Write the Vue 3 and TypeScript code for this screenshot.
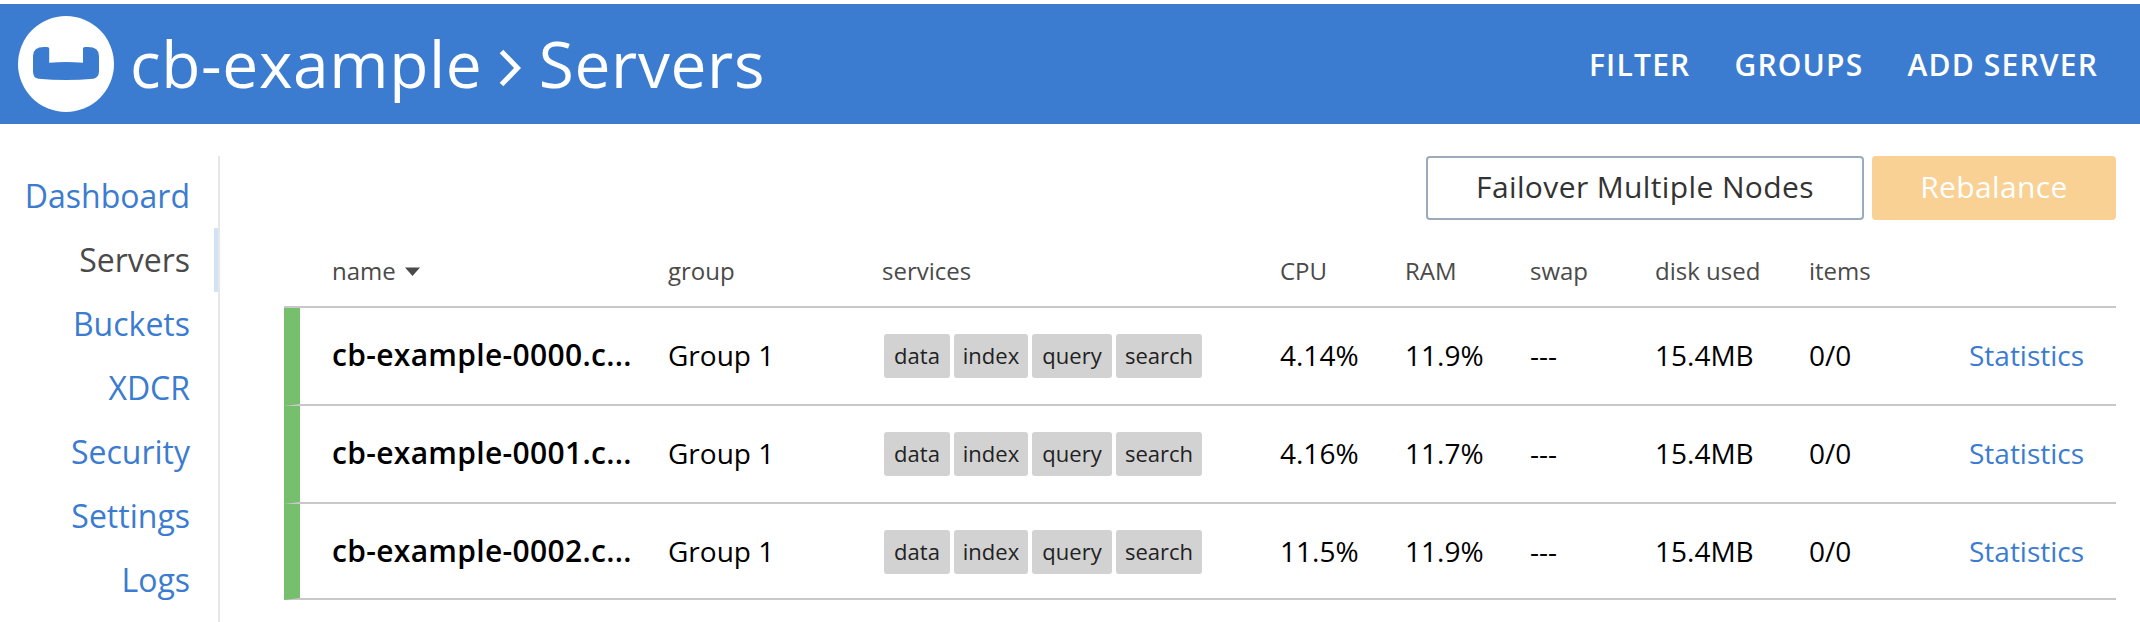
<script setup lang="ts">
interface ServerNode {
  name: string
  cpu: string
  ram: string
}

const actions: string[] = ['FILTER', 'GROUPS', 'ADD SERVER']
const menu: string[] = ['Dashboard', 'Servers', 'Buckets', 'XDCR', 'Security', 'Settings', 'Logs']
const active = 'Servers'
const services: string[] = ['data', 'index', 'query', 'search']
const nodes: ServerNode[] = [
  { name: 'cb-example-0000.c...', cpu: '4.14%', ram: '11.9%' },
  { name: 'cb-example-0001.c...', cpu: '4.16%', ram: '11.7%' },
  { name: 'cb-example-0002.c...', cpu: '11.5%', ram: '11.9%' },
]
</script>

<template>
  <div class="page">
    <header class="topbar">
      <svg class="logo" viewBox="0 0 96 96" width="96" height="96" aria-hidden="true">
        <circle cx="48" cy="48" r="48" fill="#fff" />
        <path
          fill="#3b7cd0"
          d="M31.200 32.500Q31.200 31 29 31H26Q15 31 15 40V55.500Q15 62 20.500 62.800Q48 65.300 75.500 62.800Q81 61.500 81 55.500V40Q81 31 70 31H67Q65 31 65 32.500V46.700Q48 45.300 31.200 46.700Z"
        />
      </svg>
      <h1 class="title">
        <span>cb-example</span>
        <svg class="chevron" viewBox="0 0 22 38" width="22" height="38" aria-hidden="true">
          <path d="M2.500 2.500L18.500 19L2.500 35.500" fill="none" stroke="#fff" stroke-width="5" />
        </svg>
        <span>Servers</span>
      </h1>
      <nav class="actions">
        <a v-for="a in actions" :key="a">{{ a }}</a>
      </nav>
    </header>
    <div class="body">
      <nav class="side">
        <a v-for="m in menu" :key="m" :class="{ on: m === active }">{{ m }}</a>
      </nav>
      <main class="main">
        <div class="buttons">
          <button class="btn outline">Failover Multiple Nodes</button>
          <button class="btn primary">Rebalance</button>
        </div>
        <div class="row head">
          <span class="sort">
            name
            <svg viewBox="0 0 15 9" width="15" height="9" aria-hidden="true">
              <path d="M0 0.500H15L7.500 9Z" fill="#4a4a4a" />
            </svg>
          </span>
          <span>group</span>
          <span>services</span>
          <span>CPU</span>
          <span>RAM</span>
          <span>swap</span>
          <span>disk used</span>
          <span>items</span>
        </div>
        <div v-for="n in nodes" :key="n.name" class="row node">
          <span class="name">{{ n.name }}</span>
          <span>Group 1</span>
          <span class="tags">
            <span v-for="s in services" :key="s" class="tag" :class="s">{{ s }}</span>
          </span>
          <span>{{ n.cpu }}</span>
          <span>{{ n.ram }}</span>
          <span>---</span>
          <span>15.4MB</span>
          <span>0/0</span>
          <a class="stats">Statistics</a>
        </div>
      </main>
    </div>
  </div>
</template>

<style>
body {
  background: #fff;
}
</style>

<style scoped>
.page {
  box-sizing: border-box;
  width: 2140px;
  height: 622px;
  padding-top: 4px;
  overflow: hidden;
  background: #fff;
  font-family: 'Open Sans', 'Noto Sans', sans-serif;
}
.topbar {
  display: flex;
  height: 120px;
  background: #3b7cd0;
  color: #fff;
}
.logo {
  margin: 12px 0 0 18px;
}
.title {
  display: flex;
  align-items: flex-start;
  margin: 0;
  padding-left: 16px;
  font-size: 64px;
  font-weight: 400;
  letter-spacing: 0.01em;
  line-height: 119px;
}
.chevron {
  margin: 45px 18px 0 16.5px;
}
.actions {
  display: flex;
  gap: 44px;
  margin-left: auto;
  padding-right: 42px;
  font-size: 30px;
  font-weight: 600;
  letter-spacing: 1.2px;
  line-height: 121px;
}
.body {
  display: flex;
  padding-top: 32px;
}
.side {
  display: flex;
  flex-direction: column;
  box-sizing: border-box;
  width: 220px;
  height: 466px;
  padding-top: 8px;
  border-right: 2px solid #e6e6e6;
  text-align: right;
}
.side a {
  padding-right: 24px;
  border-right: 4px solid transparent;
  color: #3b7cd0;
  font-size: 32px;
  line-height: 64px;
}
.side a.on {
  border-color: #d3e3f7;
  color: #4a4a4a;
}
.main {
  width: 1832px;
  margin-left: 64px;
}
.buttons {
  display: flex;
  justify-content: flex-end;
  gap: 8px;
}
.btn {
  box-sizing: border-box;
  height: 64px;
  padding: 0 0 3px;
  border: 2px solid #9babbb;
  border-radius: 4px;
  background: #fff;
  color: #333;
  font-family: inherit;
  font-size: 30px;
  letter-spacing: 0.38px;
  line-height: 57px;
}
.outline {
  width: 438px;
}
.primary {
  width: 244px;
  border-color: #f9d194;
  background: #f9d194;
  color: #fff;
}
.row {
  display: grid;
  grid-template-columns: 336px 214px 398px 125px 125px 125px 154px 160px 1fr;
  box-sizing: border-box;
  border-bottom: 2px solid #c8c8c8;
  white-space: nowrap;
}
.head {
  height: 88px;
  padding-left: 48px;
  color: #4a4a4a;
  font-size: 24px;
  line-height: 101px;
}
.sort svg {
  margin-left: 3px;
  vertical-align: 4px;
}
.node {
  height: 98px;
  padding-left: 32px;
  border-left: 16px solid #76bf6d;
  color: #000;
  font-size: 28px;
  line-height: 94px;
}
.node:last-child {
  height: 96px;
}
.name {
  font-size: 30px;
  font-weight: 600;
  letter-spacing: 0.32px;
  line-height: 93px;
}
.tags {
  display: flex;
  gap: 4px;
  padding: 26px 0 0 2px;
}
.tag {
  height: 44px;
  border-radius: 3px;
  background: #d2d2d2;
  color: #222;
  font-size: 22px;
  line-height: 42px;
  text-align: center;
}
.data {
  width: 66px;
}
.index {
  width: 74px;
}
.query {
  width: 80px;
}
.search {
  width: 86px;
}
.stats {
  padding-right: 32px;
  color: #3b7cd0;
  text-align: right;
}
</style>
